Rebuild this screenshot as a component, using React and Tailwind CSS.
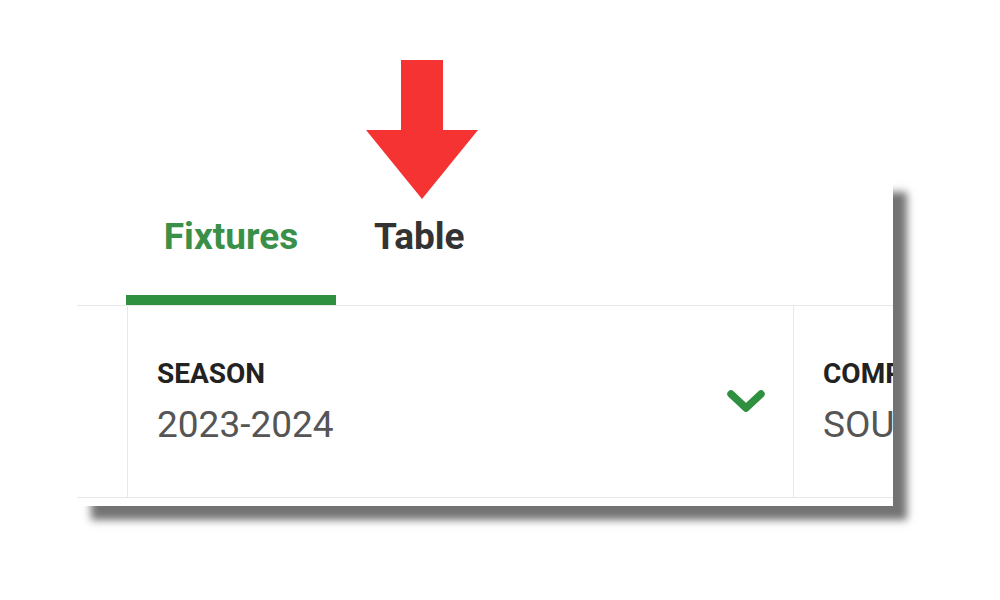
import React from "react";

function DownArrow() {
  // big red pointer sitting above the "Table" tab
  return (
    <svg
      className="absolute left-[366px] top-[60px]"
      width="112"
      height="139"
      viewBox="0 0 112 139"
    >
      <polygon
        points="35,0 77,0 77,70 112,70 56,139 0,70 35,70"
        fill="#f53333"
      />
    </svg>
  );
}

function Chevron() {
  return (
    <svg width="40" height="25" viewBox="0 0 40 25">
      <polyline
        points="5,5 20,19 35,5"
        fill="none"
        stroke="#2f9140"
        strokeWidth="7.5"
        strokeLinecap="round"
        strokeLinejoin="round"
      />
    </svg>
  );
}

export default function App() {
  return (
    <div
      className="relative w-[1000px] h-[600px] bg-white overflow-hidden"
      style={{ fontFamily: "Roboto, 'Liberation Sans', sans-serif" }}
    >
      <div className="ml-[77px] mt-[178px] w-[816px] h-[328px] bg-white overflow-hidden shadow-[14px_14px_8px_rgba(0,0,0,0.55)]">
        {/* tabs */}
        <div className="flex pl-[49px] pt-[40px] border-b border-[#e8e8e8]">
          <div className="w-[210px] flex flex-col items-center">
            <span className="h-[37px] leading-[37px] text-[37px] font-bold text-[#3a9048]">
              Fixtures
            </span>
            <div className="mt-[40px] h-[10px] w-full bg-[#2f9140]" />
          </div>
          <div className="pl-[38px] flex flex-col">
            <span className="h-[37px] leading-[37px] text-[37px] font-bold text-[#333333]">
              Table
            </span>
            <div className="mt-[40px] h-[10px]" />
          </div>
        </div>

        {/* filters */}
        <div className="flex h-[192px] border-b border-[#e8e8e8]">
          <div className="w-[51px] shrink-0 border-r border-[#e8e8e8]" />
          <div className="w-[666px] shrink-0 flex justify-between pl-[29px] pr-[27px] border-r border-[#e8e8e8]">
            <div className="pt-[54px]">
              <div className="h-[28px] leading-[28px] text-[28px] font-bold text-[#222222]">
                SEASON
              </div>
              <div className="mt-[18px] h-[37px] leading-[37px] text-[37px] text-[#555555]">
                2023-2024
              </div>
            </div>
            <div className="self-center">
              <Chevron />
            </div>
          </div>
          <div className="pl-[29px] pt-[54px] whitespace-nowrap">
            <div className="h-[28px] leading-[28px] text-[28px] font-bold text-[#222222]">
              COMPETITION
            </div>
            <div className="mt-[18px] h-[37px] leading-[37px] text-[37px] text-[#555555]">
              SOUTHERN LEAGUE
            </div>
          </div>
        </div>
      </div>
      <DownArrow />
    </div>
  );
}
